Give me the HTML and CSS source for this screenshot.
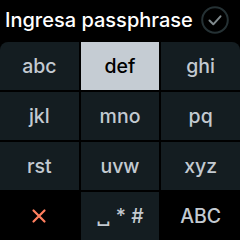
FILE: index.html
```html
<!DOCTYPE html>
<html>
<head>
<meta charset="utf-8">
<link rel="stylesheet" href="styles.css">
</head>
<body>
<div class="screen">
  <header class="head">
    <span class="title">Ingresa passphrase</span>
    <span class="confirm">
      <svg width="28" height="28" viewBox="0 0 28 28">
        <circle cx="14" cy="14" r="12.8" fill="none" stroke="#253134" stroke-width="2"/>
        <path d="M8.5 14.5 L12.3 18.3 L19.5 10.3" fill="none" stroke="#808a8d" stroke-width="2" stroke-linecap="round" stroke-linejoin="round"/>
      </svg>
    </span>
  </header>
  <div class="keys">
    <div class="key tl">abc</div>
    <div class="key sel">def</div>
    <div class="key tr">ghi</div>
    <div class="key">jkl</div>
    <div class="key">mno</div>
    <div class="key">pq</div>
    <div class="key">rst</div>
    <div class="key">uvw</div>
    <div class="key">xyz</div>
    <div class="key blank cancel">
      <svg width="16" height="16" viewBox="0 0 16 16">
        <path d="M2.5 2.5 L13.5 13.5 M13.5 2.5 L2.5 13.5" stroke="#ff7f5f" stroke-width="2.2" stroke-linecap="round"/>
      </svg>
    </div>
    <div class="key sym">␣ * #</div>
    <div class="key blank">ABC</div>
  </div>
</div>
</body>
</html>
```

FILE: styles.css
```css
html, body {
  margin: 0;
  padding: 0;
  background: #000;
}
.screen {
  width: 240px;
  height: 240px;
  display: flex;
  flex-direction: column;
  font-family: Inter, "Noto Sans", sans-serif;
  overflow: hidden;
}
.head {
  height: 42px;
  display: flex;
  align-items: center;
  justify-content: space-between;
  padding: 0 11px 3px 5px;
  box-sizing: border-box;
}
.title {
  color: #fff;
  font-size: 20px;
  font-weight: 500;
}
.confirm {
  display: flex;
}
.keys {
  flex: 1;
  display: grid;
  grid-template-columns: repeat(3, 1fr);
  grid-template-rows: repeat(4, 48px);
  gap: 2px;
}
.key {
  background: #141d21;
  color: #c3cad1;
  display: flex;
  align-items: center;
  justify-content: center;
  font-size: 19.5px;
  font-weight: 500;
}
.key.tl { border-top-left-radius: 8px; }
.key.tr { border-top-right-radius: 8px; }
.key.sel {
  background: #c5ccd3;
  color: #000;
}
.key.blank {
  background: #000;
}
```
